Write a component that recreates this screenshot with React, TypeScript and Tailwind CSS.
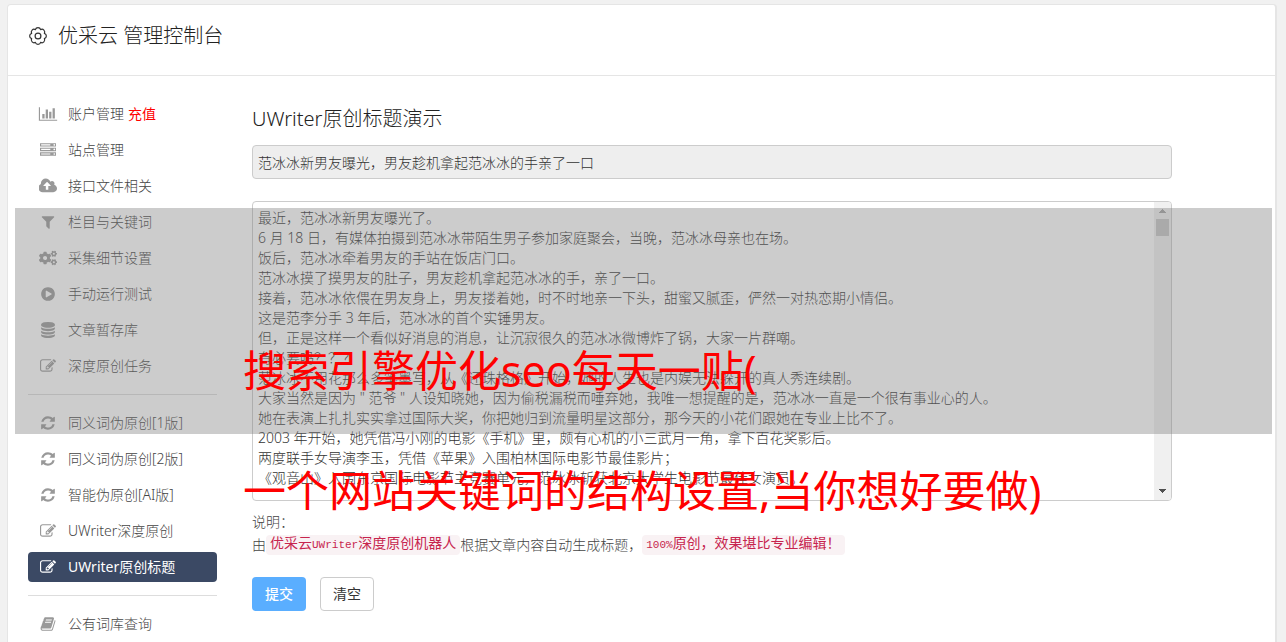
import React from "react";
import { FaCogs } from "react-icons/fa";

type IconProps = { className?: string };

const makeIcon = (viewBox: string, d: string): React.FC<IconProps> => {
  const Icon: React.FC<IconProps> = ({ className }) => (
    <svg viewBox={viewBox} fill="currentColor" aria-hidden="true" className={className}>
      <path d={d} />
    </svg>
  );
  return Icon;
};

const ChartIcon = makeIcon(
  "0 0 2048 1792",
  "M640 896v512h-256v-512h256zm384-512v1024h-256v-1024h256zm1024 1152v128h-2048v-1536h128v1408h1920zm-640-896v768h-256v-768h256zm384-384v1152h-256v-1152h256z"
);
const ServerIcon = makeIcon(
  "0 0 1792 1792",
  "M128 1408h1024v-128h-1024v128zm0-512h1024v-128h-1024v128zm1568 448q0-40-28-68t-68-28-68 28-28 68 28 68 68 28 68-28 28-68zm-1568-960h1024v-128h-1024v128zm1568 448q0-40-28-68t-68-28-68 28-28 68 28 68 68 28 68-28 28-68zm0-512q0-40-28-68t-68-28-68 28-28 68 28 68 68 28 68-28 28-68zm96 832v384h-1792v-384h1792zm0-512v384h-1792v-384h1792zm0-512v384h-1792v-384h1792z"
);
const CloudUploadIcon = makeIcon(
  "0 0 1856 1792",
  "M1216 864q0-14-9-23l-352-352q-9-9-23-9t-23 9l-351 351q-10 12-10 24 0 14 9 23t23 9h224v352q0 13 9.5 22.5t22.5 9.5h192q13 0 22.5-9.5t9.5-22.5v-352h224q13 0 22.5-9.5t9.5-22.5zm640 288q0 159-112.5 271.5t-271.5 112.5h-1088q-185 0-316.5-131.5t-131.5-316.5q0-130 70-240t188-165q-2-30-2-43 0-212 150-362t362-150q156 0 285.5 87t188.5 231q71-62 166-62 106 0 181 75t75 181q0 76-41 138 130 31 213.5 135.5t83.5 238.5z"
);
const FilterIcon = makeIcon(
  "0 0 1792 1792",
  "M1595 295q17 41-14 70l-493 493v742q0 42-39 59-13 5-25 5-27 0-45-19l-256-256q-19-19-19-45v-486l-493-493q-31-29-14-70 17-39 59-39h1280q42 0 59 39z"
);
const PlayIcon = makeIcon(
  "0 0 1792 1792",
  "M896 128q209 0 385.5 103t279.5 279.5 103 385.5-103 385.5-279.5 279.5-385.5 103-385.5-103-279.5-279.5-103-385.5 103-385.5 279.5-279.5 385.5-103zm384 823q32-18 32-55t-32-55l-544-320q-31-19-64-1-32 19-32 56v640q0 37 32 56 16 8 32 8 17 0 32-9z"
);
const DatabaseIcon = makeIcon(
  "0 0 1792 1792",
  "M896 768q237 0 443-43t325-127v170q0 69-103 128t-280 93.5-385 34.5-385-34.5-280-93.5-103-128v-170q119 84 325 127t443 43zm0 768q237 0 443-43t325-127v170q0 69-103 128t-280 93.5-385 34.5-385-34.5-280-93.5-103-128v-170q119 84 325 127t443 43zm0-384q237 0 443-43t325-127v170q0 69-103 128t-280 93.5-385 34.5-385-34.5-280-93.5-103-128v-170q119 84 325 127t443 43zm0-1152q208 0 385 34.5t280 93.5 103 128v128q0 69-103 128t-280 93.5-385 34.5-385-34.5-280-93.5-103-128v-128q0-69 103-128t280-93.5 385-34.5z"
);
const EditIcon = makeIcon(
  "0 0 1792 1792",
  "M888 1184l116-116-152-152-116 116v56h96v96h56zm440-720q-16-16-33 1l-350 350q-17 17-1 33t33-1l350-350q17-17 1-33zm80 594v190q0 119-84.5 203.5t-203.5 84.5h-832q-119 0-203.5-84.5t-84.5-203.5v-832q0-119 84.5-203.5t203.5-84.5h832q63 0 117 25 15 7 18 23 3 17-9 29l-49 49q-14 14-32 8-23-6-45-6h-832q-66 0-113 47t-47 113v832q0 66 47 113t113 47h832q66 0 113-47t47-113v-126q0-13 9-22l64-64q15-15 35-7t20 29zm-96-738l288 288-672 672h-288v-288zm444 132l-92 92-288-288 92-92q28-28 68-28t68 28l152 152q28 28 28 68t-28 68z"
);
const RefreshIcon = makeIcon(
  "0 0 1792 1792",
  "M1639 1056q0 5-1 7-64 268-268 434.5t-478 166.5q-146 0-282.5-55t-243.5-157l-129 129q-19 19-45 19t-45-19-19-45v-448q0-26 19-45t45-19h448q26 0 45 19t19 45-19 45l-137 137q71 66 161 102t187 36q134 0 250-65t186-179q11-17 53-117 8-23 30-23h192q13 0 22.5 9.5t9.5 22.5zm25-800v448q0 26-19 45t-45 19h-448q-26 0-45-19t-19-45 19-45l138-138q-148-137-349-137-134 0-250 65t-186 179q-11 17-53 117-8 23-30 23h-199q-13 0-22.5-9.5t-9.5-22.5v-7q65-268 270-434.5t480-166.5q146 0 284 55.5t245 156.5l130-129q19-19 45-19t45 19 19 45z"
);
const BookIcon = makeIcon(
  "0 0 1792 1792",
  "M1703 478q40 57 18 129l-275 906q-19 64-76.5 107.5t-122.5 43.5h-923q-77 0-148.5-53.5t-99.5-131.5q-24-67-2-127 0-4 3-27t4-37q1-8-3-21.5t-3-19.5q2-11 8-21t16.5-23.5 16.5-23.5q23-38 45-91.5t30-91.5q3-10 .5-30t-.5-28q3-11 17-28t17-23q21-36 42-92t25-90q1-9-2.5-32t.5-28q4-13 22-30.5t22-22.5q19-26 42.5-84.5t27.5-96.5q1-8-3-25.5t-2-26.5q2-8 9-18t18-23 17-21q8-12 16.5-30.5t15-35 16-36 19.5-32 26.5-23.5 36-11.5 47.5 5.5l-1 3q38-9 51-9h761q74 0 114 56t18 130l-274 906q-36 119-71.5 153.5t-128.5 34.5h-869q-27 0-38 15-11 16-1 43 24 70 144 70h923q29 0 56-15.5t35-41.5l300-987q7-22 5-57 38 15 59 43zm-1064 2q-4 13 2 22.5t20 9.5h608q13 0 25.5-9.5t16.5-22.5l21-64q4-13-2-22.5t-20-9.5h-608q-13 0-25.5 9.5t-16.5 22.5zm-83 256q-4 13 2 22.5t20 9.5h608q13 0 25.5-9.5t16.5-22.5l21-64q4-13-2-22.5t-20-9.5h-608q-13 0-25.5 9.5t-16.5 22.5z"
);

const GearIcon: React.FC<IconProps> = ({ className }) => (
  <svg
    viewBox="0 0 20 20"
    fill="none"
    stroke="currentColor"
    strokeWidth="1.2"
    strokeLinejoin="round"
    aria-hidden="true"
    className={className}
  >
    <path d="M7.36 3.63a2.75 2.75 0 0 1 5.28 0a2.75 2.75 0 0 1 3.73 3.73a2.75 2.75 0 0 1 0 5.28a2.75 2.75 0 0 1-3.73 3.73a2.75 2.75 0 0 1-5.28 0a2.75 2.75 0 0 1-3.73-3.73a2.75 2.75 0 0 1 0-5.28a2.75 2.75 0 0 1 3.73-3.73z" />
    <circle cx="10" cy="10" r="2.9" />
  </svg>
);

type NavItem = {
  title: string;
  href: string;
  icon: React.FC<IconProps>;
  iconClass: string;
  extra?: string;
  active?: boolean;
};

const NAV_GROUPS: NavItem[][] = [
  [
    { title: "账户管理", href: "#account", icon: ChartIcon, iconClass: "h-4 w-5", extra: "充值" },
    { title: "站点管理", href: "#sites", icon: ServerIcon, iconClass: "size-4" },
    { title: "接口文件相关", href: "#api", icon: CloudUploadIcon, iconClass: "size-[18px]" },
    { title: "栏目与关键词", href: "#keywords", icon: FilterIcon, iconClass: "size-4" },
    { title: "采集细节设置", href: "#collect", icon: FaCogs, iconClass: "size-[18px]" },
    { title: "手动运行测试", href: "#run", icon: PlayIcon, iconClass: "size-4" },
    { title: "文章暂存库", href: "#drafts", icon: DatabaseIcon, iconClass: "size-4" },
    { title: "深度原创任务", href: "#tasks", icon: EditIcon, iconClass: "size-4" },
  ],
  [
    { title: "同义词伪原创[1版]", href: "#synonym-1", icon: RefreshIcon, iconClass: "size-4" },
    { title: "同义词伪原创[2版]", href: "#synonym-2", icon: RefreshIcon, iconClass: "size-4" },
    { title: "智能伪原创[AI版]", href: "#ai", icon: RefreshIcon, iconClass: "size-4" },
    { title: "UWriter深度原创", href: "#uwriter", icon: EditIcon, iconClass: "size-4" },
    { title: "UWriter原创标题", href: "#uwriter-title", icon: EditIcon, iconClass: "size-4", active: true },
  ],
  [{ title: "公有词库查询", href: "#words", icon: BookIcon, iconClass: "size-4" }],
];

const ARTICLE_TITLE = "范冰冰新男友曝光，男友趁机拿起范冰冰的手亲了一口";

const ARTICLE = [
  "最近，范冰冰新男友曝光了。",
  "6 月 18 日，有媒体拍摄到范冰冰带陌生男子参加家庭聚会，当晚，范冰冰母亲也在场。",
  "饭后，范冰冰牵着男友的手站在饭店门口。",
  "范冰冰摸了摸男友的肚子，男友趁机拿起范冰冰的手，亲了一口。",
  "接着，范冰冰依偎在男友身上，男友搂着她，时不时地亲一下头，甜蜜又腻歪，俨然一对热恋期小情侣。",
  "这是范李分手 3 年后，范冰冰的首个实锤男友。",
  "但，正是这样一个看似好消息的消息，让沉寂很久的范冰冰微博炸了锅，大家一片群嘲。",
  "有必要吗？？？",
  "范冰冰不用花那么多笔墨写，从《还珠格格》开始，她的人生也是内娱无法躲开的真人秀连续剧。",
  '大家当然是因为 " 范爷 " 人设知晓她，因为偷税漏税而唾弃她，我唯一想提醒的是，范冰冰一直是一个很有事业心的人。',
  "她在表演上扎扎实实拿过国际大奖，你把她归到流量明星这部分，那今天的小花们跟她在专业上比不了。",
  "2003 年开始，她凭借冯小刚的电影《手机》里，颇有心机的小三武月一角，拿下百花奖影后。",
  "两度联手女导演李玉，凭借《苹果》入围柏林国际电影节最佳影片；",
  "《观音山》入围东京国际电影节主竞赛单元，范冰冰斩获北京大学生电影节最佳女演员。",
].join("\n");

const Sidebar: React.FC = () => {
  return (
    <nav className="w-[189px] flex-none">
      {NAV_GROUPS.map((group, index) => (
        <React.Fragment key={index}>
          {index > 0 && <hr className="my-[13px] border-[#dddddd]" />}
          <ul className="flex flex-col gap-[6px]">
            {group.map((item) => (
              <li
                key={item.href}
                className={
                  item.active
                    ? "flex h-[30px] items-center rounded bg-[#3b4964] pl-[10px] font-normal text-white"
                    : "flex h-[30px] items-center rounded pl-[10px] text-[#444444]"
                }
              >
                <a href={item.href} className="flex items-center gap-[10px]">
                  <span
                    className={
                      item.active
                        ? "flex w-5 justify-center text-white"
                        : "flex w-5 justify-center text-[#999999]"
                    }
                  >
                    <item.icon className={item.iconClass} />
                  </span>
                  {item.title}
                </a>
                {item.extra && (
                  <a href="#recharge" className="ml-1 font-normal text-[#ff0000]">
                    {item.extra}
                  </a>
                )}
              </li>
            ))}
          </ul>
        </React.Fragment>
      ))}
    </nav>
  );
};

const TitleForm: React.FC = () => {
  return (
    <main className="max-w-[920px] flex-1 pt-[6px]">
      <h2 className="text-xl leading-7 text-[#222222]">UWriter原创标题演示</h2>
      <form onSubmit={(e) => e.preventDefault()}>
        <input
          type="text"
          aria-label="标题"
          readOnly
          defaultValue={ARTICLE_TITLE}
          className="mt-3 block h-[34px] w-full rounded border border-[#cccccc] bg-[#eeeeee] px-[5px] text-[#333333]"
        />
        <div className="mt-[22px] flex h-[300px] overflow-hidden rounded border border-[#cccccc] bg-white">
          <textarea
            aria-label="文章内容"
            defaultValue={ARTICLE}
            className="min-w-0 flex-1 resize-none overflow-hidden px-[5px] py-[6px] leading-5 text-[#333333] outline-none"
          />
          <div className="flex w-[17px] flex-none flex-col items-center justify-between bg-[#f0f0f0] py-[7px]">
            <div className="flex flex-col items-center gap-[6px]">
              <svg viewBox="0 0 7 4" className="h-1 w-[7px]" fill="#a3a3a3" aria-hidden="true">
                <path d="M3 0h1v1h1v1h1v1h1v1H0V3h1V2h1V1h1z" />
              </svg>
              <div className="h-[17px] w-[13px] bg-[#c6c6c6]" />
            </div>
            <svg viewBox="0 0 7 4" className="h-1 w-[7px]" fill="#505050" aria-hidden="true">
              <path d="M0 0h7v1H6v1H5v1H4v1H3V3H2V2H1V1H0z" />
            </svg>
          </div>
        </div>
        <div className="mt-[9px] leading-[23px] text-[#444444]">
          <p>说明：</p>
          <p className="flex items-center whitespace-nowrap">
            由
            <code className="rounded bg-[#f9f2f4] px-1 font-['Liberation_Mono','Noto_Sans_CJK_SC',monospace] text-sm leading-[19px] font-normal text-[#c7254e]">
              优采云<span className="text-[11px]">UWriter</span>深度原创机器人
            </code>
            根据文章内容自动生成标题，
            <code className="rounded bg-[#f9f2f4] px-1 font-['Liberation_Mono','Noto_Sans_CJK_SC',monospace] text-sm leading-[19px] font-normal text-[#c7254e]">
              <span className="text-[11px]">100%</span>原创，效果堪比专业编辑！
            </code>
          </p>
        </div>
        <div className="mt-[21px] flex gap-[14px]">
          <button type="submit" className="h-[34px] rounded bg-[#5aaeff] px-[13px] font-medium text-white">
            提交
          </button>
          <button type="reset" className="h-[34px] rounded border border-[#cccccc] bg-white px-3 font-normal text-[#333333]">
            清空
          </button>
        </div>
      </form>
    </main>
  );
};

// Grey band with the headline, laid over the page
const Banner: React.FC = () => {
  return (
    <div className="pointer-events-none absolute top-[208px] right-[14px] left-[15px] h-[226px] bg-[#808080]/40 pt-[103px] pl-[228px]">
      <p className="text-[43px] leading-[120px] font-normal whitespace-nowrap text-[#ff0000]">
        搜索引擎优化seo每天一贴(
        <br />
        一个网站关键词的结构设置,当你想好要做)
      </p>
    </div>
  );
};

const App: React.FC = () => {
  return (
    <div className="relative flex h-screen flex-col overflow-hidden bg-[#f1f1f1] pt-1 pr-[9px] pl-[7px] font-['Noto_Sans','Noto_Sans_CJK_SC',sans-serif] text-sm font-light">
      <div className="flex-1 rounded-t border border-r-2 border-b-0 border-[#e5e5e5] bg-white">
        <header className="flex items-center gap-[10px] border-b border-[#e5e5e5] px-5 pt-4 pb-6">
          <GearIcon className="size-5 text-[#333333]" />
          <h1 className="text-xl leading-[30px] text-[#222222]">优采云 管理控制台</h1>
        </header>
        <div className="flex gap-[35px] px-5 pt-[23px]">
          <Sidebar />
          <TitleForm />
        </div>
      </div>
      <Banner />
    </div>
  );
};

export default App;
